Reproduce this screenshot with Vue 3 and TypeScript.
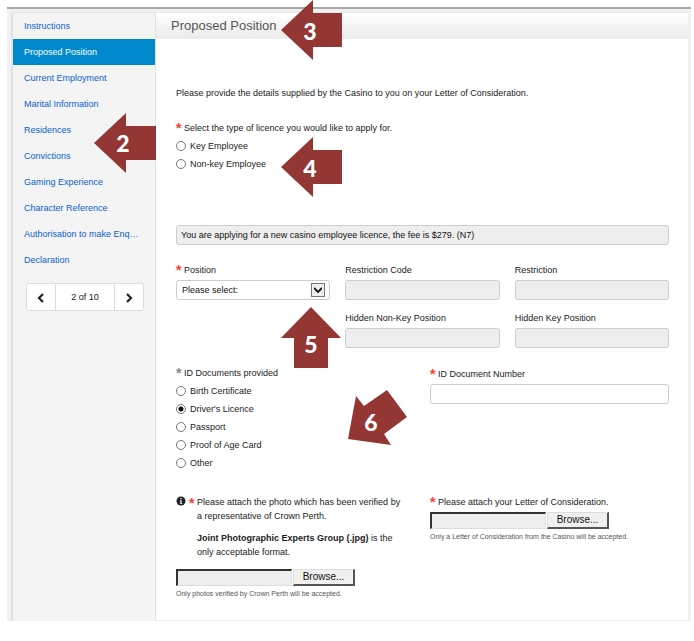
<script setup lang="ts">
import { ref } from 'vue'

interface Callout {
  label: string
  left: number
  top: number
  width: number
  height: number
  points: string
  textX: number
  textY: number
}

const steps: string[] = [
  'Instructions',
  'Proposed Position',
  'Current Employment',
  'Marital Information',
  'Residences',
  'Convictions',
  'Gaming Experience',
  'Character Reference',
  'Authorisation to make Enquiries',
  'Declaration',
]
const current = ref(1)

const licenceTypes: string[] = ['Key Employee', 'Non-key Employee']
const licence = ref('')

const documents: string[] = ['Birth Certificate', "Driver's Licence", 'Passport', 'Proof of Age Card', 'Other']
const document = ref("Driver's Licence")

const leftArrow = '0,30 32,0 32,13 61,13 61,47 32,47 32,60'
const callouts: Callout[] = [
  { label: '2', left: 94, top: 113, width: 62, height: 60, points: '0,30 32,0 32,13 62,13 62,47 32,47 32,60', textX: 29, textY: 39 },
  { label: '3', left: 281, top: 0, width: 62, height: 60, points: leftArrow, textX: 29, textY: 40 },
  { label: '4', left: 281, top: 137, width: 62, height: 60, points: leftArrow, textX: 29, textY: 40 },
  { label: '5', left: 281, top: 307, width: 60, height: 61, points: '30,0 60,31 47,31 47,61 13,61 13,31 0,31', textX: 30, textY: 46 },
  { label: '6', left: 348, top: 390, width: 60, height: 56, points: '0,49 8,6 16,16 39,0 59,27 36,44 43,55', textX: 23, textY: 41 },
]
</script>

<template>
  <div class="page">
    <div class="frame">
      <nav class="sidebar">
        <ul class="steps">
          <li v-for="(step, i) in steps" :key="step">
            <a href="#" :class="['step', { active: i === current }]" @click.prevent="current = i">{{ step }}</a>
          </li>
        </ul>
        <div class="pager">
          <button type="button" aria-label="Previous page">
            <svg width="8" height="10" viewBox="0 0 8 10"><path d="M6 1 L2 5 L6 9" /></svg>
          </button>
          <span>2 of 10</span>
          <button type="button" aria-label="Next page">
            <svg width="8" height="10" viewBox="0 0 8 10"><path d="M2 1 L6 5 L2 9" /></svg>
          </button>
        </div>
      </nav>

      <main class="main">
        <h1>Proposed Position</h1>
        <form class="form" @submit.prevent>
          <p class="intro">Please provide the details supplied by the Casino to you on your Letter of Consideration.</p>

          <fieldset class="licence">
            <legend><b class="star">*</b>Select the type of licence you would like to apply for.</legend>
            <label v-for="l in licenceTypes" :key="l" class="choice">
              <input v-model="licence" type="radio" name="licence" :value="l" />{{ l }}
            </label>
          </fieldset>

          <input class="box fee" type="text" readonly aria-label="Licence fee" value="You are applying for a new casino employee licence, the fee is $279. (N7)" />

          <div class="thirds">
            <div class="field">
              <label for="position"><b class="star">*</b>Position</label>
              <div class="select">
                <select id="position" class="box"><option>Please select:</option></select>
                <span class="drop"><svg width="8" height="6" viewBox="0 0 8 6"><path d="M0 1 L4 5 L8 1" /></svg></span>
              </div>
            </div>
            <div class="field">
              <label for="code">Restriction Code</label>
              <input id="code" class="box" type="text" readonly />
            </div>
            <div class="field">
              <label for="restriction">Restriction</label>
              <input id="restriction" class="box" type="text" readonly />
            </div>
            <div class="field second">
              <label for="nonkey">Hidden Non-Key Position</label>
              <input id="nonkey" class="box" type="text" readonly />
            </div>
            <div class="field">
              <label for="key">Hidden Key Position</label>
              <input id="key" class="box" type="text" readonly />
            </div>
          </div>

          <div class="halves documents">
            <fieldset>
              <legend><b class="star muted">*</b>ID Documents provided</legend>
              <label v-for="d in documents" :key="d" class="choice">
                <input v-model="document" type="radio" name="document" :value="d" />{{ d }}
              </label>
            </fieldset>
            <div class="field">
              <label for="number"><b class="star">*</b>ID Document Number</label>
              <input id="number" class="box" type="text" />
            </div>
          </div>

          <div class="halves uploads">
            <div>
              <div class="note">
                <svg class="info" width="10" height="10" viewBox="0 0 10 10">
                  <circle cx="5" cy="5" r="4.5" fill="#222" />
                  <path d="M4 4.2 H5.6 V7 H6.3 V7.8 H3.8 V7 H4.4 V5 H4 Z M4.3 2 H5.6 V3.3 H4.3 Z" fill="#fff" />
                </svg>
                <b class="star">*</b>
                <div>
                  <label for="photo">Please attach the photo which has been verified by a representative of Crown Perth.</label>
                  <p><b>Joint Photographic Experts Group (.jpg)</b> is the only acceptable format.</p>
                </div>
              </div>
              <div class="file">
                <input id="photo" type="text" readonly />
                <button type="button">Browse...</button>
              </div>
              <small>Only photos verified by Crown Perth will be accepted.</small>
            </div>
            <div>
              <label class="letter" for="letter"><b class="star">*</b>Please attach your Letter of Consideration.</label>
              <div class="file close">
                <input id="letter" type="text" readonly />
                <button type="button">Browse...</button>
              </div>
              <small>Only a Letter of Consideration from the Casino will be accepted.</small>
            </div>
          </div>
        </form>
      </main>
    </div>

    <svg
      v-for="c in callouts"
      :key="c.label"
      class="callout"
      :width="c.width"
      :height="c.height"
      :style="{ left: c.left + 'px', top: c.top + 'px' }"
    >
      <polygon :points="c.points" />
      <text :x="c.textX" :y="c.textY">{{ c.label }}</text>
    </svg>
  </div>
</template>

<style>
body {
  margin: 0;
  background: #fff;
}
</style>

<style scoped>
* {
  box-sizing: border-box;
}
.page {
  position: relative;
  padding: 7px 3px 20px 7px;
  font: 9px/18px 'Liberation Sans', Arial, sans-serif;
  color: #222;
}
.frame {
  display: flex;
  padding: 3px 3px 0 4px;
  border-top: 2px solid #a8a8a8;
  background: #f1f1f1;
}
.sidebar {
  flex: 0 0 145px;
  min-width: 0;
  border: 1px solid #e2e2e2;
  border-left-width: 2px;
  border-bottom: 0;
  border-radius: 4px 0 0 0;
  background: #f4f4f4;
}
.steps {
  list-style: none;
  margin: 0;
  padding: 0;
}
.step {
  display: block;
  height: 26px;
  padding: 0 15px 0 11px;
  line-height: 26px;
  color: #0a62cc;
  text-decoration: none;
  white-space: nowrap;
  overflow: hidden;
  text-overflow: ellipsis;
}
.step.active {
  background: #0088cc;
  color: #fff;
}
.pager {
  display: flex;
  height: 28px;
  margin: 10px 11px 0 13px;
  border: 1px solid #ddd;
  border-radius: 3px;
  background: #fff;
}
.pager button {
  flex: 0 0 28px;
  display: flex;
  align-items: center;
  justify-content: center;
  padding: 2px 0 0;
  border: 0;
  background: none;
}
.pager span {
  flex: 1;
  border: solid #ddd;
  border-width: 0 1px;
  line-height: 26px;
  text-align: center;
}
.pager path {
  fill: none;
  stroke: #222;
  stroke-width: 2.2;
}
.main {
  flex: 1;
  min-width: 0;
  border-top: 1px solid #e6e6e6;
  border-bottom: 1px solid #eee;
  background: #fff;
}
h1 {
  height: 26px;
  margin: 0;
  padding-left: 15px;
  border-bottom: 1px solid #eee;
  background: linear-gradient(#fff, #ebebeb);
  font-size: 13px;
  font-weight: 400;
  line-height: 26px;
  color: #555;
}
.form {
  padding: 45px 19px 20px 20px;
}
p {
  margin: 0;
}
fieldset {
  min-width: 0;
  margin: 0;
  padding: 0;
  border: 0;
}
legend {
  display: block;
  padding: 0;
}
.star {
  display: inline-block;
  width: 8px;
  font-size: 14px;
  line-height: 12px;
  vertical-align: -2px;
  color: #ff3b2f;
}
.star.muted {
  color: #888;
}
.licence {
  margin-top: 17px;
}
.choice {
  display: flex;
  align-items: center;
  gap: 4px;
  height: 18px;
}
.choice input {
  appearance: none;
  width: 10px;
  height: 10px;
  margin: 0;
  border: 1px solid #777;
  border-radius: 50%;
  background: #fff;
}
.choice input:checked {
  background: radial-gradient(circle, #111 0 2px, #fff 3px);
}
.box {
  display: block;
  width: 100%;
  height: 20px;
  margin: 0;
  padding: 0 4px;
  border: 1px solid #ccc;
  border-radius: 3px;
  background: #fff;
  font: inherit;
  color: #111;
  outline: 0;
}
.box:read-only:not(select) {
  background: #eee;
}
.fee {
  margin-top: 52px;
}
.thirds {
  display: grid;
  grid-template-columns: repeat(3, 1fr);
  gap: 8px 15px;
  margin-top: 15px;
}
.second {
  grid-column: 2;
}
.field label {
  display: block;
  height: 20px;
  line-height: 20px;
}
.select {
  position: relative;
}
.select select {
  appearance: none;
  padding: 0 5px;
}
.drop {
  position: absolute;
  top: 3px;
  right: 5px;
  display: flex;
  align-items: center;
  justify-content: center;
  width: 14px;
  height: 14px;
  border: 1px solid #777;
  background: #eee;
  pointer-events: none;
}
.drop path {
  fill: none;
  stroke: #111;
  stroke-width: 1.8;
}
.halves {
  display: grid;
  grid-template-columns: repeat(2, 1fr);
  gap: 15px;
}
.documents {
  margin-top: 16px;
}
.uploads {
  margin-top: 23px;
  line-height: 14px;
}
.note {
  display: flex;
  padding-right: 11px;
}
.info {
  flex: none;
  margin: 1px 3px 0 0;
}
.note .star {
  flex: none;
  line-height: 16px;
}
.note p {
  margin-top: 8px;
}
.letter {
  display: block;
  height: 14px;
}
.file {
  display: flex;
  gap: 1px;
  height: 17px;
  margin-top: 10px;
}
.file.close {
  margin-top: 3px;
}
.file input {
  width: 116px;
  padding: 0 3px;
  border: 1px solid #ddd;
  border-top: 2px solid #333;
  border-left: 2px solid #333;
  background: #eee;
  font: inherit;
  outline: 0;
}
.file button {
  width: 62px;
  padding: 0;
  border: 1px solid #ddd;
  border-right: 2px solid #555;
  border-bottom: 2px solid #555;
  background: #f0f0f0;
  font: 10px/12px 'Liberation Sans', Arial, sans-serif;
  color: #111;
}
small {
  display: block;
  margin-top: 2px;
  font-size: 7px;
  line-height: 12px;
  color: #555;
}
.callout {
  position: absolute;
  pointer-events: none;
}
.callout polygon {
  fill: #943634;
}
.callout text {
  fill: #fff;
  font: 900 23px Lato, sans-serif;
  text-anchor: middle;
}
</style>
